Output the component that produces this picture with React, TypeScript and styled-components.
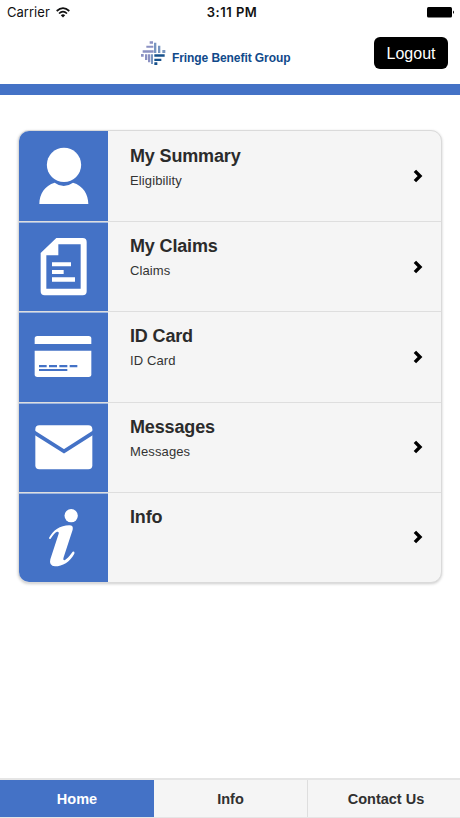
import React from "react";
import styled, { createGlobalStyle } from "styled-components";

const BLUE = "#4472c6";

const GlobalStyle = createGlobalStyle`
  * { box-sizing: border-box; }
  body { margin: 0; background: #fff; font-family: "Liberation Sans", Arial, sans-serif; color: #2e2e2e; }
`;
const Screen = styled.div`
  width: 460px; height: 818px; display: flex; flex-direction: column; overflow: hidden; background: #fff;
`;
const StatusBar = styled.div`
  height: 24px; flex: none; display: grid; grid-template-columns: 1fr auto 1fr; align-items: center;
  padding: 0 5px 0 7px; font: 13px/16px Inter, sans-serif; color: #111;
`;
const Carrier = styled.div`
  display: flex; align-items: center; gap: 6px; letter-spacing: 0.03px;
`;
const Clock = styled.div`
  font-weight: 600; font-size: 13px; letter-spacing: 0.5px; padding-left: 2px;
`;
const BatteryIcon = styled.svg`
  justify-self: end; display: block;
`;
const Header = styled.header`
  height: 60px; flex: none; display: flex; justify-content: space-between; align-items: flex-start;
  padding: 0 12px 0 140px;
`;
const Brand = styled.div`
  display: flex; align-items: flex-start; padding-top: 16px; gap: 6px;
`;
const BrandName = styled.div`
  padding-top: 11px; white-space: nowrap; color: #10498a;
  font-size: 12px; line-height: 15px; font-weight: 700; letter-spacing: -0.08px;
`;
const LogoutButton = styled.button`
  width: 74px; height: 32px; margin-top: 13px; padding: 1px 0 0; border: 0; border-radius: 6px;
  background: #000; color: #fff; font: 16px/31px "Liberation Sans", Arial, sans-serif;
`;
const Stripe = styled.div`
  height: 11px; flex: none; background: ${BLUE};
`;
const Main = styled.main`
  flex: 1; padding: 35px 18px 0;
`;
const Menu = styled.nav`
  height: 453px; display: grid; grid-template-rows: 90px repeat(4, 1fr); overflow: hidden;
  border: 1px solid #dadada; border-radius: 11px; background: #f5f5f5; box-shadow: 0 1px 3px rgba(0, 0, 0, 0.2);
`;
const Tile = styled.div`
  background: ${BLUE}; overflow: hidden;
  svg { display: block; width: 89px; height: 89.33px; }
`;
const Labels = styled.div`
  padding: 14px 0 0 22px;
`;
const Row = styled.div`
  display: grid; grid-template-columns: 89px 1fr 29px; min-height: 0;
  & + & { border-top: 1px solid #dedede; }
  & + & ${Tile} { border-top: 1px solid #9db5df; }
  & + & ${Labels} { padding-top: 13px; }
`;
const Title = styled.div`
  font-size: 18px; line-height: 22px; font-weight: 700; letter-spacing: -0.15px; color: #2b2b2b;
`;
const Subtitle = styled.div`
  margin-top: 5px; font-size: 13px; line-height: 17px; letter-spacing: 0.12px; color: #333;
`;
const Chevron = styled.svg`
  align-self: center; display: block;
`;
const Tabs = styled.footer`
  height: 40px; flex: none; display: grid; grid-template-columns: 154px 153px 153px;
  border-top: 2px solid #e5e5e5; border-bottom: 1px solid #e5e5e5;
`;
const Tab = styled.div<{ $active?: boolean }>`
  display: flex; align-items: center; justify-content: center; font-size: 14.5px; font-weight: 700;
  color: ${(p) => (p.$active ? "#fff" : "#303030")};
  background: ${(p) => (p.$active ? BLUE : "#f5f5f5")};
  & + & + & { border-left: 1px solid #dedede; padding-left: 4px; }
`;

const PersonIcon = () => (
  <svg viewBox="27 33 267 268" fill="#fff">
    <path d="M88 252C88 222 104 197 134 188Q161 208 189 188C219 197 235 222 235 252Z" />
    <circle cx="162" cy="134.500" r="54.500" fill="none" stroke={BLUE} strokeWidth="7" />
    <circle cx="162" cy="134.500" r="51.500" />
  </svg>
);
const DocumentIcon = () => (
  <svg viewBox="27 23 267 268" fill="#fff">
    <path fillRule="evenodd" d="M139 68H218Q230 68 230 80V228Q230 240 218 240H104Q92 240 92 228V113ZM145 87V120H109V220H212V87Z" />
    <path d="M126 141h57v12h-57zM126 164h35v12h-35zM126 186h69v13h-69z" />
  </svg>
);
const CardIcon = () => (
  <svg viewBox="27 15 267 268" fill="#fff">
    <path d="M74 108V92Q74 84 82 84H236Q244 84 244 92V108Z" />
    <path d="M74 128H244V199Q244 207 236 207H82Q74 207 74 199Z" />
    <path fill={BLUE} d="M87 171h23v7h-23zM117 171h24v7h-24zM148 171h24v7h-24zM179 171h23v7h-23zM87 183h85v6h-85z" />
  </svg>
);
const MailIcon = () => (
  <svg viewBox="26 17 267 268">
    <rect x="75" y="81" width="171" height="132" rx="12" fill="#fff" />
    <path d="M71 102L161 159L250 102" fill="none" stroke={BLUE} strokeWidth="11" />
  </svg>
);
const InfoIcon = () => (
  <svg viewBox="27 17 267 268" fill="#fff">
    <circle cx="183.500" cy="82" r="20" />
    <path d="M117 149C129 126 150 111 178 111Q191 111 188 124L161 207C158 216 162 218 168 213C177 206 183 197 188 190Q195 187 193 196C179 221 158 234 135 234Q116 233 121 213L145 139Q149 129 141 130C134 132 128 143 122 151Q118 154 117 149Z" />
  </svg>
);
const Wifi = () => (
  <svg width="14" height="11" viewBox="0 0 14 11" fill="none" stroke="#111" strokeWidth="1.700">
    <path d="M.7 4Q7-1.800 13.300 4M3 6.500Q7 2.800 11 6.500" />
    <path d="M4.800 8.200Q7 6.200 9.200 8.200L7 10.500Z" fill="#111" stroke="none" />
  </svg>
);
const BrandMark = () => (
  <svg width="26" height="26" viewBox="0 0 78 78">
    <path fill="#8b91c2" d="M29 4h10v7H29zM19 17h21v6H19zM8 31h33v7H8zM3 42h8v8H3zM15 43h7v17h-7zM24 43h7v24h-7z" />
    <path fill="#7895c0" d="M42 8h7v31h-7zM54 17h7v22h-7zM67 30h9v9h-9zM33 43h6v29h-6z" />
    <path fill="#17518c" d="M43 43h31v7H43zM43 56h21v7H43zM43 67h9v8h-9z" />
  </svg>
);

const items = [
  { title: "My Summary", subtitle: "Eligibility", Icon: PersonIcon },
  { title: "My Claims", subtitle: "Claims", Icon: DocumentIcon },
  { title: "ID Card", subtitle: "ID Card", Icon: CardIcon },
  { title: "Messages", subtitle: "Messages", Icon: MailIcon },
  { title: "Info", subtitle: "", Icon: InfoIcon },
];

export default function App() {
  return (
    <Screen>
      <GlobalStyle />
      <StatusBar>
        <Carrier>Carrier <Wifi /></Carrier>
        <Clock>3:11 PM</Clock>
        <BatteryIcon width="28" height="11" viewBox="0 0 28 11">
          <rect width="25" height="10.500" rx="1.500" />
          <path d="M26 3.500Q28 5.200 26 7Z" />
        </BatteryIcon>
      </StatusBar>
      <Header>
        <Brand>
          <BrandMark />
          <BrandName>Fringe Benefit Group</BrandName>
        </Brand>
        <LogoutButton>Logout</LogoutButton>
      </Header>
      <Stripe />
      <Main>
        <Menu>
          {items.map(({ title, subtitle, Icon }) => (
            <Row key={title}>
              <Tile><Icon /></Tile>
              <Labels>
                <Title>{title}</Title>
                {subtitle && <Subtitle>{subtitle}</Subtitle>}
              </Labels>
              <Chevron width="12" height="14" viewBox="0 0 12 14">
                <path d="M2.900 1.900L8 7L2.900 12.100" fill="none" stroke="#000" strokeWidth="3.400" />
              </Chevron>
            </Row>
          ))}
        </Menu>
      </Main>
      <Tabs>
        <Tab $active>Home</Tab>
        <Tab>Info</Tab>
        <Tab>Contact Us</Tab>
      </Tabs>
    </Screen>
  );
}
